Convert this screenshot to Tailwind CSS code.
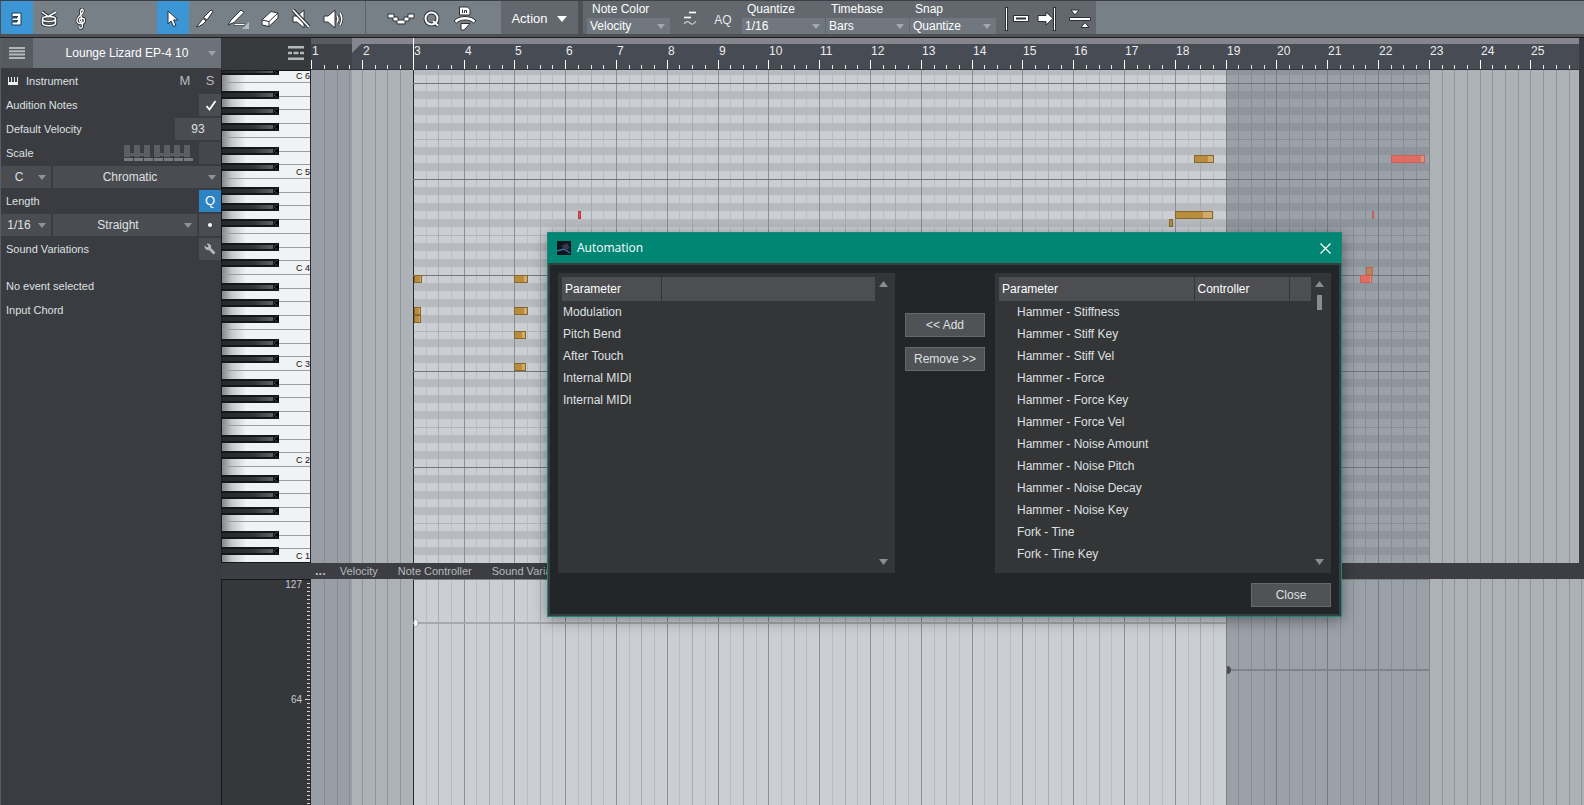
<!DOCTYPE html>
<html lang="en">

<head>
    <meta charset="UTF-8">
    <meta name="viewport" content="width=device-width, initial-scale=1.0">
    <title>Piano Roll Editor</title>
    <script src="https://cdn.jsdelivr.net/npm/@tailwindcss/browser@4"></script>
</head>

<body class="flex h-screen flex-col overflow-hidden bg-[#3a3c41] font-['Liberation_Sans',Arial,sans-serif] text-[11px] text-[#dfe0e2]">

    <!-- Toolbar -->
    <header class="flex h-[38px] shrink-0 border-t border-b border-t-[#3c3f44] border-b-[#1b1c1e] bg-[#4e5257] pb-[3px] pl-px text-xs text-white">
        <div class="flex flex-1 bg-[#788087] [&_svg]:mt-[2px]">
            <button aria-label="Piano view" class="flex h-full w-8 items-center justify-center bg-[#3c96d6]">
                <svg width="12" height="14" viewBox="0 0 12 14"><path d="M1 1h9v12H1v-3h5V9H1V6h5V5H1z" fill="#fff" stroke="#1d3b55"/><path d="M2 4.500h5M2 8.500h5" stroke="#1d3b55"/></svg>
            </button>
            <button aria-label="Drum view" class="flex h-full w-8 items-center justify-center">
                <svg width="18" height="18" viewBox="0 0 18 18" fill="none"><g stroke="#2c3034" stroke-width="3.400"><path d="M2 2l7 5M16 2L9 6"/><ellipse cx="9" cy="9" rx="6.500" ry="2.500"/><path d="M2.500 9v4c0 3.500 13 3.500 13 0V9"/></g><g stroke="#fff" stroke-width="1.500"><path d="M2 2l7 5M16 2L9 6"/><ellipse cx="9" cy="9" rx="6.500" ry="2.500"/><path d="M2.500 9v4c0 3.500 13 3.500 13 0V9"/></g></svg>
            </button>
            <button aria-label="Score view" class="flex h-full w-8 items-center justify-center">
                <svg width="14" height="22" viewBox="0 0 14 22" fill="none"><path d="M5 18.500c0 2.500 3.500 2.300 3.500-.5L6.500 4.500c0-4.500 3.500-4 2.500-.5-.6 2.500-6 5-6 8.500 0 4 7.500 4 7.500 0 0-3.300-5-3-5-.3 0 1 .8 1.700 1.500 1.800" stroke="#2c3034" stroke-width="3"/><path d="M5 18.500c0 2.500 3.500 2.300 3.500-.5L6.500 4.500c0-4.500 3.500-4 2.500-.5-.6 2.500-6 5-6 8.500 0 4 7.500 4 7.500 0 0-3.300-5-3-5-.3 0 1 .8 1.700 1.500 1.800" stroke="#fff" stroke-width="1.300"/></svg>
            </button>
            <div class="ml-[60px] flex border-r border-[#5d6369] pr-[14px]">
                <button aria-label="Arrow tool" class="flex h-full w-8 items-center justify-center bg-[#3c96d6]">
                    <svg width="14" height="18" viewBox="0 0 14 18"><path d="M2 1v13l3-3 2.500 5.500 2.500-1L7.500 10H12z" fill="#fff" stroke="#23323f"/></svg>
                </button>
                <button aria-label="Split tool" class="flex h-full w-8 items-center justify-center">
                    <svg width="20" height="20" viewBox="0 0 20 20"><path d="M1.500 18L8 9.500l3 2.500c-2 3-5.500 5-9.500 6z" fill="#fff" stroke="#2c3034"/><path d="M8.500 8.500l7.500-7.500 2 1.500-6 8.500z" fill="#fff" stroke="#2c3034"/></svg>
                </button>
                <button aria-label="Paint tool" class="flex h-full w-[34px] items-center justify-center">
                    <svg width="24" height="22" viewBox="0 0 24 22"><path d="M2 17l3-5L15 2l3 2.500L8 14.500z" fill="#fff" stroke="#2c3034"/><path d="M8 16.500h11" stroke="#2c3034" stroke-width="3"/><path d="M8.500 16.500h10" stroke="#fff" stroke-width="1.500"/><path d="M23 14v7h-7z" fill="#b5babf"/></svg>
                </button>
                <button aria-label="Eraser tool" class="flex h-full w-[30px] items-center justify-center">
                    <svg width="20" height="18" viewBox="0 0 20 18" stroke="#2c3034"><path d="M2 10L11 1.500l7 1.500v5l-9 8.500-7-1.500z" fill="#fff"/><path d="M2 10l7 1.500L18 3M9 11.500v5" fill="none"/></svg>
                </button>
                <button aria-label="Mute tool" class="flex h-full w-8 items-center justify-center">
                    <svg width="20" height="20" viewBox="0 0 20 20"><path d="M2 7h4l7-6v18l-7-6H2z" fill="#fff" stroke="#2c3034"/><path d="M2 1l16 17" stroke="#2c3034" stroke-width="4"/><path d="M2 1l16 17" stroke="#fff" stroke-width="1.800"/></svg>
                </button>
                <button aria-label="Listen tool" class="flex h-full w-[34px] items-center justify-center">
                    <svg width="22" height="20" viewBox="0 0 22 20" fill="none"><path d="M1 7h4l7-6v18l-7-6H1z" fill="#fff" stroke="#2c3034"/><g stroke="#2c3034" stroke-width="3"><path d="M14 6.500q2 3.500 0 7M17 4q3.500 6 0 12"/></g><g stroke="#fff" stroke-width="1.500"><path d="M14 6.500q2 3.500 0 7M17 4q3.500 6 0 12"/></g></svg>
                </button>
            </div>
            <div class="flex flex-1 items-center pl-[21px]">
                <button aria-label="Humanize" class="flex h-full w-7 items-center">
                    <svg width="28" height="12" viewBox="0 0 28 12"><path d="M1 1h6v3h4v3h6V4h4V1h6v4h-5v3h-4v3h-8V8H6V5H1z" fill="#fff" stroke="#2c3034"/><path d="M7 4v1M11 7v1M17 7v1M21 4v1" stroke="#2c3034"/></svg>
                </button>
                <button aria-label="Quantize" class="ml-[7px] flex h-full w-5 items-center justify-center">
                    <svg width="20" height="20" viewBox="0 0 20 20" fill="none"><g stroke="#2c3034" stroke-width="4"><circle cx="9.500" cy="9.500" r="6"/><path d="M11 12l5 4.500"/></g><g stroke="#fff" stroke-width="2"><circle cx="9.500" cy="9.500" r="6"/><path d="M11 12l5 4.500"/></g></svg>
                </button>
                <button aria-label="Event transform" class="ml-[9px] flex h-full w-7 items-center justify-center">
                    <svg width="24" height="26" viewBox="0 0 24 26" stroke="#2c3034"><path d="M6.500 1h8l2.500 2.500V9H6.500z" fill="#fff"/><path d="M9.500 3.500V7M11.500 7V4.500h2V7" fill="none"/><path d="M1 15C5 9 19 9 23 15l-2.500 2C17 13 7 13 3.500 17z" fill="#fff"/><path d="M8 17.500h9l-6 6.500H8z" fill="#fff"/></svg>
                </button>
            </div>
        </div>
        <div class="flex shrink-0">
            <button class="flex w-[77px] items-center justify-center gap-2 bg-[#62686e] pt-[2px] text-[13px]">
                <span>Action</span>
                <svg width="12" height="8" viewBox="0 0 12 8"><path d="M1 1h10L6 7z" fill="#fff"/></svg>
            </button>
            <div class="ml-[5px] flex bg-[#62686e]">
                <div class="ml-1 flex w-[83px] flex-col justify-between">
                    <label for="noteColor" class="pl-[5px] leading-4">Note Color</label>
                    <div class="relative h-4 bg-[#70777e]">
                        <select id="noteColor" class="block h-4 w-full appearance-none pl-[3px] leading-4"><option>Velocity</option><option>Pitch</option></select>
                        <svg class="pointer-events-none absolute top-[6px] right-[5px]" width="8" height="5" viewBox="0 0 8 5"><path d="M0 0h8L4 5z" fill="#a3a9ae"/></svg>
                    </div>
                </div>
                <button aria-label="Ghost notes" class="ml-[13px] flex w-[14px] items-center justify-center pt-[2px]">
                    <svg width="14" height="16" viewBox="0 0 14 16" fill="none"><path d="M6 1.500h7M1 6.500h7" stroke="#2c3034" stroke-width="3"/><path d="M6 1.500h7M1 6.500h7" stroke="#fff" stroke-width="2"/><path d="M1 13q3-4 6-1t6-2" stroke="#c3c7ca" stroke-width="1.300"/></svg>
                </button>
                <button class="ml-4 w-5 pt-1 text-[#e8e9ea]">AQ</button>
                <div class="ml-[9px] flex w-[83px] flex-col justify-between">
                    <label for="quantize" class="pl-[5px] leading-4">Quantize</label>
                    <div class="relative h-4 bg-[#70777e]">
                        <select id="quantize" class="block h-4 w-full appearance-none pl-[3px] leading-4"><option>1/16</option><option>1/8</option></select>
                        <svg class="pointer-events-none absolute top-[6px] right-[5px]" width="8" height="5" viewBox="0 0 8 5"><path d="M0 0h8L4 5z" fill="#a3a9ae"/></svg>
                    </div>
                </div>
                <div class="ml-px flex w-[83px] flex-col justify-between">
                    <label for="timebase" class="pl-[5px] leading-4">Timebase</label>
                    <div class="relative h-4 bg-[#70777e]">
                        <select id="timebase" class="block h-4 w-full appearance-none pl-[3px] leading-4"><option>Bars</option><option>Seconds</option></select>
                        <svg class="pointer-events-none absolute top-[6px] right-[5px]" width="8" height="5" viewBox="0 0 8 5"><path d="M0 0h8L4 5z" fill="#a3a9ae"/></svg>
                    </div>
                </div>
                <div class="ml-px flex w-[86px] flex-col justify-between">
                    <label for="snap" class="pl-[5px] leading-4">Snap</label>
                    <div class="relative h-4 bg-[#70777e]">
                        <select id="snap" class="block h-4 w-full appearance-none pl-[3px] leading-4"><option>Quantize</option><option>Adaptive</option></select>
                        <svg class="pointer-events-none absolute top-[6px] right-[5px]" width="8" height="5" viewBox="0 0 8 5"><path d="M0 0h8L4 5z" fill="#a3a9ae"/></svg>
                    </div>
                </div>
                <div class="flex items-center gap-2 pt-[2px] pr-[5px] pl-[9px]">
                    <button aria-label="Snap to start">
                        <svg width="24" height="24" viewBox="0 0 24 24"><path d="M1.500 0v24" stroke="#2c3034" stroke-width="3"/><path d="M1.500 1v22" stroke="#fff"/><rect x="8.500" y="8.500" width="15" height="6" fill="#fff" stroke="#2c3034"/><path d="M11 11.500h10" stroke="#2c3034" stroke-width="2"/></svg>
                    </button>
                    <button aria-label="Snap to end">
                        <svg width="19" height="24" viewBox="0 0 19 24"><path d="M17.500 0v24" stroke="#2c3034" stroke-width="3"/><path d="M17.500 1v22" stroke="#fff"/><path d="M1 8.500h8V5l7 6.500L9 18v-3.500H1z" fill="#fff" stroke="#2c3034"/></svg>
                    </button>
                    <button aria-label="Snap to zero crossing" class="ml-[5px]">
                        <svg width="22" height="24" viewBox="0 0 22 24" stroke="#2c3034"><path d="M2 3h8L6 8zM12 20.500h8l-4-5z" fill="#fff"/><path d="M.5 10.500h21v3H.5z" fill="#fff"/></svg>
                    </button>
                </div>
            </div>
        </div>
        <div class="w-[488px] shrink-0 bg-[#788087]"></div>
    </header>

    <main class="flex min-h-0 flex-1">

        <!-- Inspector -->
        <aside class="flex w-[221px] shrink-0 flex-col border-l border-[#5a5d63]">
            <div class="mb-px flex h-[30px]">
                <button aria-label="Tracks" class="flex w-8 items-center justify-center bg-[#565b62]">
                    <svg width="16" height="12" viewBox="0 0 16 12"><path d="M0 1h16M0 4.300h16M0 7.600h16M0 11h16" stroke="#b2b6bb" stroke-width="2"/></svg>
                </button>
                <div class="relative flex-1 bg-[#6c727a]">
                    <select aria-label="Instrument track" class="h-full w-full appearance-none text-center text-xs text-white"><option>Lounge Lizard EP-4 10</option></select>
                    <svg class="pointer-events-none absolute top-[13px] right-[5px]" width="8" height="5" viewBox="0 0 8 5"><path d="M0 0h8L4 5z" fill="#9da3a9"/></svg>
                </div>
            </div>
            <div class="flex h-6 items-center pl-[7px]">
                <svg width="10" height="8" viewBox="0 0 10 8"><path d="M0 0h1v5h2V0h1v5h2V0h1v5h2V0h1v8H0z" fill="#eceded"/></svg>
                <span class="ml-2 flex-1">Instrument</span>
                <button class="w-[22px] text-[13px] text-[#b9bbbe]">M</button>
                <button class="ml-[3px] w-[22px] text-[13px] text-[#b9bbbe]">S</button>
            </div>
            <div class="flex h-6 items-center justify-between pl-[5px]">
                <label for="audition">Audition Notes</label>
                <div class="relative h-[22px] w-[22px]">
                    <input id="audition" type="checkbox" checked class="peer block h-[22px] w-[22px] appearance-none bg-[#4a4c51]">
                    <svg class="pointer-events-none absolute top-[6px] left-[6px] hidden peer-checked:block" width="12" height="11" viewBox="0 0 12 11"><path d="M1.500 6l3 3.500L10.500 1" fill="none" stroke="#fff" stroke-width="1.800"/></svg>
                </div>
            </div>
            <div class="flex h-6 items-center justify-between pl-[5px]">
                <label for="velocity">Default Velocity</label>
                <input id="velocity" type="text" value="93" class="h-[22px] w-[46px] bg-[#4a4c51] text-center text-xs">
            </div>
            <div class="flex h-6 items-center pl-[5px]">
                <label for="scaleOn" class="flex-1">Scale</label>
                <svg id="scaleKeys" width="72" height="16"></svg>
                <input id="scaleOn" type="checkbox" class="ml-[3px] block h-[22px] w-[22px] appearance-none bg-[#45474c]">
            </div>
            <div class="flex h-6 items-center gap-[2px] text-xs">
                <div class="relative h-[22px] w-[50px] bg-[#4a4c51]">
                    <select aria-label="Scale root" class="h-full w-full appearance-none pr-[14px] text-center"><option>C</option><option>D</option></select>
                    <svg class="pointer-events-none absolute top-[9px] right-[5px]" width="8" height="5" viewBox="0 0 8 5"><path d="M0 0h8L4 5z" fill="#8f9296"/></svg>
                </div>
                <div class="relative h-[22px] flex-1 bg-[#4a4c51]">
                    <select aria-label="Scale type" class="h-full w-full appearance-none pr-[14px] text-center"><option>Chromatic</option><option>Major</option></select>
                    <svg class="pointer-events-none absolute top-[9px] right-[5px]" width="8" height="5" viewBox="0 0 8 5"><path d="M0 0h8L4 5z" fill="#8f9296"/></svg>
                </div>
            </div>
            <div class="flex h-6 items-center justify-between pl-[5px]">
                <span>Length</span>
                <button class="h-[22px] w-[22px] bg-[#2d84c4] text-[13px] text-white">Q</button>
            </div>
            <div class="flex h-6 items-center gap-[2px] text-xs">
                <div class="relative h-[22px] w-[50px] bg-[#4a4c51]">
                    <select aria-label="Note length" class="h-full w-full appearance-none pr-[14px] text-center"><option>1/16</option><option>1/8</option></select>
                    <svg class="pointer-events-none absolute top-[9px] right-[5px]" width="8" height="5" viewBox="0 0 8 5"><path d="M0 0h8L4 5z" fill="#8f9296"/></svg>
                </div>
                <div class="relative h-[22px] flex-1 bg-[#4a4c51]">
                    <select aria-label="Note feel" class="h-full w-full appearance-none pr-[14px] text-center"><option>Straight</option><option>Triplet</option></select>
                    <svg class="pointer-events-none absolute top-[9px] right-[5px]" width="8" height="5" viewBox="0 0 8 5"><path d="M0 0h8L4 5z" fill="#8f9296"/></svg>
                </div>
                <button aria-label="Dotted" class="flex h-[22px] w-[22px] items-center justify-center bg-[#4a4c51]"><span class="size-1 rounded-full bg-white"></span></button>
            </div>
            <div class="flex h-6 items-center justify-between pl-[5px]">
                <span>Sound Variations</span>
                <button aria-label="Edit sound variations" class="flex h-[22px] w-[22px] items-center justify-center bg-[#4a4c51]">
                    <svg width="12" height="12" viewBox="0 0 12 12"><path d="M2.500.8A3.400 3.400 0 0 1 7 5l4.500 4.500-2 2L5 7A3.400 3.400 0 0 1 .8 2.500L3 4.500 4.500 3z" fill="#b4b6b9"/></svg>
                </button>
            </div>
            <p class="mt-[13px] flex h-6 items-center pl-[5px]">No event selected</p>
            <p class="flex h-6 items-center pl-[5px]">Input Chord</p>
        </aside>

        <section class="flex min-w-0 flex-1 flex-col">
            <!-- Ruler -->
            <div class="flex h-8 shrink-0 pr-[5px]">
                <div class="flex w-[90px] shrink-0 items-start justify-end bg-[#38393d] pt-2 pr-[7px]">
                    <button aria-label="View options">
                        <svg width="16" height="14" viewBox="0 0 16 14"><path d="M0 1.200h16M0 12.800h16" stroke="#b4b7bb" stroke-width="2.400"/><path d="M0 7h4M5.500 7h5M12 7h4" stroke="#b4b7bb" stroke-width="2.400"/></svg>
                    </button>
                </div>
                <svg id="ruler" class="block h-full w-0 min-w-0 flex-1"></svg>
            </div>

            <!-- Keyboard and note grid -->
            <div class="flex h-[493px] shrink-0 pr-[5px]">
                <svg id="keyboard" class="block h-full w-[90px] shrink-0"></svg>
                <svg id="roll" class="block h-full w-0 min-w-0 flex-1"></svg>
            </div>

            <!-- Controller lane -->
            <nav class="flex h-4 shrink-0 items-center bg-[#3c3e43] pl-[94px] text-[#b9bbbf]">
                <button class="text-[13px] leading-3 font-bold">...</button>
                <button class="ml-[14px]">Velocity</button>
                <button class="ml-5">Note Controller</button>
                <button class="ml-5">Sound Variations</button>
            </nav>
            <div class="flex min-h-0 flex-1">
                <svg id="laneScale" class="block h-full w-[90px] shrink-0"></svg>
                <svg id="lane" class="block h-full w-0 min-w-0 flex-1"></svg>
            </div>
        </section>
    </main>

    <!-- Automation dialog -->
    <div role="dialog" aria-labelledby="dialogTitle" class="absolute top-[232px] left-[547px] flex w-[795px] flex-col border border-[#1f8577] bg-[#222629] text-xs shadow-[0_3px_14px_rgba(0,0,0,0.4)]">
        <div class="flex h-[30px] shrink-0 items-center bg-[#028674] pr-[10px] pl-[9px] text-white">
            <svg width="14" height="14" viewBox="0 0 14 14"><rect width="14" height="14" fill="#10141d"/><path d="M0 10l7-2 6 4" fill="none" stroke="#3f6fae" stroke-width="1.500"/><path d="M4 5l6-3 3 5-4 2z" fill="#343a4a"/></svg>
            <h2 id="dialogTitle" class="ml-[6px] flex-1 font-['Open_Sans',sans-serif] text-xs">Automation</h2>
            <button aria-label="Close dialog">
                <svg width="11" height="11" viewBox="0 0 11 11"><path d="M.5.5l10 10M10.500.5l-10 10" stroke="#fff" stroke-width="1.200"/></svg>
            </button>
        </div>
        <div class="flex flex-col border-2 border-[#33403f] px-2 pb-[7px]">
            <div class="mt-2 flex h-[300px]">
                <div class="flex flex-1 justify-between bg-[#343537] p-1">
                    <table class="h-fit w-[313px] table-fixed text-left">
                        <thead class="h-6 bg-[#4d4e51] text-white">
                            <tr>
                                <th class="w-[99px] border-r border-[#343537] pl-[3px] font-normal">Parameter</th>
                                <th></th>
                            </tr>
                        </thead>
                        <tbody>
                            <tr class="h-[22px]"><td class="pl-px whitespace-nowrap">Modulation</td><td></td></tr>
                            <tr class="h-[22px]"><td class="pl-px whitespace-nowrap">Pitch Bend</td><td></td></tr>
                            <tr class="h-[22px]"><td class="pl-px whitespace-nowrap">After Touch</td><td></td></tr>
                            <tr class="h-[22px]"><td class="pl-px whitespace-nowrap">Internal MIDI</td><td></td></tr>
                            <tr class="h-[22px]"><td class="pl-px whitespace-nowrap">Internal MIDI</td><td></td></tr>
                        </tbody>
                    </table>
                    <div class="flex w-4 flex-col items-center justify-between py-1">
                        <svg width="9" height="6" viewBox="0 0 9 6"><path d="M4.500 0L9 6H0z" fill="#8b8c8e"/></svg>
                        <svg width="9" height="6" viewBox="0 0 9 6"><path d="M0 0h9L4.500 6z" fill="#8b8c8e"/></svg>
                    </div>
                </div>
                <div class="flex w-[100px] flex-col gap-[10px] px-[10px] pt-10">
                    <button class="h-6 border border-[#66686c] bg-[#505256]">&lt;&lt; Add</button>
                    <button class="h-6 border border-[#66686c] bg-[#505256]">Remove &gt;&gt;</button>
                </div>
                <div class="flex flex-1 justify-between bg-[#343537] p-1">
                    <table class="h-fit w-[312px] table-fixed text-left">
                        <thead class="h-6 bg-[#4d4e51] text-white">
                            <tr>
                                <th class="w-[195px] border-r border-[#343537] pl-[3px] font-normal">Parameter</th>
                                <th class="w-[95px] border-r border-[#343537] pl-[3px] font-normal">Controller</th>
                                <th></th>
                            </tr>
                        </thead>
                        <tbody>
                            <tr class="h-[22px]"><td class="pl-[18px]">Hammer - Stiffness</td><td></td><td></td></tr>
                            <tr class="h-[22px]"><td class="pl-[18px]">Hammer - Stiff Key</td><td></td><td></td></tr>
                            <tr class="h-[22px]"><td class="pl-[18px]">Hammer - Stiff Vel</td><td></td><td></td></tr>
                            <tr class="h-[22px]"><td class="pl-[18px]">Hammer - Force</td><td></td><td></td></tr>
                            <tr class="h-[22px]"><td class="pl-[18px]">Hammer - Force Key</td><td></td><td></td></tr>
                            <tr class="h-[22px]"><td class="pl-[18px]">Hammer - Force Vel</td><td></td><td></td></tr>
                            <tr class="h-[22px]"><td class="pl-[18px]">Hammer - Noise Amount</td><td></td><td></td></tr>
                            <tr class="h-[22px]"><td class="pl-[18px]">Hammer - Noise Pitch</td><td></td><td></td></tr>
                            <tr class="h-[22px]"><td class="pl-[18px]">Hammer - Noise Decay</td><td></td><td></td></tr>
                            <tr class="h-[22px]"><td class="pl-[18px]">Hammer - Noise Key</td><td></td><td></td></tr>
                            <tr class="h-[22px]"><td class="pl-[18px]">Fork - Tine</td><td></td><td></td></tr>
                            <tr class="h-[22px]"><td class="pl-[18px]">Fork - Tine Key</td><td></td><td></td></tr>
                        </tbody>
                    </table>
                    <div class="flex w-4 flex-col items-center justify-between py-1">
                        <div class="flex flex-col items-center gap-2">
                            <svg width="9" height="6" viewBox="0 0 9 6"><path d="M4.500 0L9 6H0z" fill="#8b8c8e"/></svg>
                            <div class="h-[15px] w-[5px] bg-[#8b8c8e]"></div>
                        </div>
                        <svg width="9" height="6" viewBox="0 0 9 6"><path d="M0 0h9L4.500 6z" fill="#8b8c8e"/></svg>
                    </div>
                </div>
            </div>
            <div class="mt-[10px] flex justify-end">
                <button class="h-6 w-20 border border-[#66686c] bg-[#505256]">Close</button>
            </div>
        </div>
    </div>

    <script>
        const BAR = 50.8;
        const ORIGIN = 0.7;
        const ROW = 8;
        const OCTAVE = ROW * 12;
        const FIRST_C = 13;
        const beatX = (i) => Math.floor(ORIGIN + i * BAR / 4);
        const barX = (n) => beatX((n - 1) * 4);
        const rect = (x, y, w, h, fill, extra = '') =>
            `<rect x="${x}" y="${y}" width="${w}" height="${h}" fill="${fill}" ${extra}/>`;

        // part runs from bar 3 to 19, its tail to bar 23
        const partStart = barX(3);
        const partEnd = barX(19);
        const tailEnd = barX(23);

        function drawBackground(w, h) {
            let s = rect(0, 0, w, h, '#adb2b6');
            s += rect(0, 0, 41, h, '#999da5');
            s += rect(partStart, 0, partEnd - partStart, h, '#cbced3');
            s += rect(partEnd, 0, tailEnd - partEnd, h, '#9aa1a8');
            return s;
        }

        function drawBeats(w, h) {
            let s = '';
            for (let i = 1; beatX(i) < w; i++) {
                const x = beatX(i);
                const beat = i % 4;
                let color = '#90959a';
                if (x < 41) color = '#868a91';
                else if (x >= partStart && x < partEnd) color = beat === 0 ? '#8a8e96' : beat === 2 ? '#a9acb2' : '#b9bcc1';
                else if (x >= partEnd && x < tailEnd) color = beat === 0 ? '#757b82' : '#878d94';
                s += rect(x, 0, 1, h, color);
            }
            s += rect(partStart, 0, 1, h, '#26282b');
            s += rect(partEnd, 0, 1, h, '#7c8084') + rect(tailEnd, 0, 1, h, '#808487');
            return s;
        }

        function drawRuler() {
            const el = document.getElementById('ruler');
            const w = el.clientWidth;
            let s = rect(0, 0, w, 32, '#474b54') + rect(0, 0, w, 6, '#84858d');
            s += rect(0, 0, 41, 32, '#3f4249') + rect(0, 0, 41, 6, '#585b62');
            s += '<path d="M41 6h9l-9 9z" fill="#84858d"/>';
            s += rect(0, 31, w, 1, '#33363b');
            for (let i = 0; beatX(i) < w; i++) {
                const x = beatX(i);
                s += i % 4 ? rect(x, 27, 1, 4, '#e6e7e9') : rect(x, 22, 1, 9, '#fff');
                if (i % 4 === 0) s += `<text x="${x + 1}" y="17" font-size="12" fill="#eceded">${i / 4 + 1}</text>`;
            }
            s += rect(partStart, 0, 1, 32, '#fff');
            el.innerHTML = s;
        }

        function drawKeyboard() {
            let s = `<defs>
                <linearGradient id="ivory"><stop offset="0" stop-color="#7d7f82"/><stop offset=".12" stop-color="#c5c7c9"/><stop offset=".28" stop-color="#f1f2f3"/></linearGradient>
                <linearGradient id="ebony"><stop offset="0" stop-color="#24282a"/><stop offset=".6" stop-color="#303436"/><stop offset="1" stop-color="#5c6062"/></linearGradient>
            </defs>`;
            s += rect(0, 0, 90, 493, 'url(#ivory)');
            for (let o = -1; o < 6; o++) {
                const top = FIRST_C + o * OCTAVE;
                for (let k = 0; k < 7; k++) s += rect(0, Math.round(top + k * OCTAVE / 7) - 1, 90, 1, '#9a9c9f');
                for (const k of [1, 3, 5, 8, 10]) {
                    const y = top + k * ROW;
                    s += rect(0, y, 58, 8, '#14171a') + rect(1, y + 2, 51, 4, 'url(#ebony)');
                    s += `<path d="M58 ${y + 1}l-5 3 5 3z" fill="#000"/><path d="M57 ${y + 1}l-4 3 4 3" fill="none" stroke="#4a4d4f" stroke-width=".7"/>`;
                }
                if (o >= 0) s += `<text x="75" y="${top - 4}" font-size="9" fill="#111">C ${6 - o}</text>`;
            }
            s += rect(0, 0, 1, 493, '#17181a') + rect(89, 0, 1, 493, '#26282b') + rect(0, 492, 90, 1, '#17181a');
            s += rect(0, 0, 90, 1, '#17181a');
            document.getElementById('keyboard').innerHTML = s;
        }

        // x, y, width, velocity part width, kind
        const notes = [
            [103, 205, 8, 5, 'gold'], [103, 237, 7, 4, 'gold'], [103, 245, 7, 4, 'gold'],
            [203, 205, 14, 9, 'gold'], [203, 237, 14, 9, 'gold'], [203, 261, 12, 7, 'gold'], [203, 293, 12, 7, 'gold'],
            [267, 141, 3, 3, 'red'],
            [883, 85, 20, 13, 'gold'], [864, 141, 38, 27, 'gold'], [858, 149, 4, 2, 'gold'],
            [1080, 85, 34, 29, 'coral'], [1061, 141, 2, 2, 'coral'], [1055, 197, 7, 5, 'rust'], [1049, 205, 12, 9, 'coral'],
        ];
        const noteColors = {
            gold: ['#b98d3e', '#cfab6c', '#86682a'],
            red: ['#dc5a55', '#dc5a55', '#b73c3a'],
            coral: ['#e06c62', '#dd9086', '#cb6058'],
            rust: ['#b98463', '#c1957b', '#c1683f'],
        };

        function drawRoll() {
            const el = document.getElementById('roll');
            const w = el.clientWidth;
            const h = 493;
            let s = drawBackground(w, h);
            for (let o = -1; o < 5; o++) {
                const top = FIRST_C + o * OCTAVE;
                for (const k of [1, 3, 5, 8, 10]) {
                    s += rect(partStart, top + k * ROW, partEnd - partStart, ROW, '#b7babf');
                    s += rect(partEnd, top + k * ROW, tailEnd - partEnd, ROW, '#8f959d');
                }
                s += rect(partStart, top + 7 * ROW, tailEnd - partStart, 1, '#000', 'fill-opacity=".12"');
            }
            s += drawBeats(w, h);
            for (let y = FIRST_C; y < h; y += OCTAVE) s += rect(partStart, y, tailEnd - partStart, 1, '#72767c');
            for (const [x, y, nw, vw, kind] of notes) {
                const [fill, light, edge] = noteColors[kind];
                s += rect(x, y, nw, 8, edge);
                if (nw > 2) s += rect(x + 1, y + 1, nw - 2, 6, light) + rect(x + 1, y + 1, Math.min(vw, nw - 2), 6, fill);
            }
            el.innerHTML = s;
        }

        function drawLane() {
            const el = document.getElementById('lane');
            const w = el.clientWidth;
            const h = el.clientHeight;
            let s = drawBackground(w, h) + drawBeats(w, h);
            s += rect(partStart, 0, tailEnd - partStart, 1, '#7c8085');
            s += rect(partStart, 43, partEnd - partStart, 2, '#a5a8ac') + rect(partEnd, 90, tailEnd - partEnd, 2, '#7f858b');
            s += `<path d="M${partStart + 1} 40a4 4 0 0 1 0 8z" fill="#fff" stroke="#85888c" stroke-width=".6"/>`;
            s += `<path d="M${partEnd + 1} 87a4 4 0 0 1 0 8z" fill="#4a4e53"/>`;
            el.innerHTML = s;

            let t = rect(0, 0, 90, h, '#36373b') + rect(0, 0, 90, 1, '#17181a') + rect(0, 0, 1, h, '#17181a') + rect(89, 0, 1, h, '#222427');
            for (let y = 4; y < h; y += 4) t += y === 120 ? rect(84, y, 5, 1, '#d6d7d9') : rect(86, y, 3, 1, '#d6d7d9');
            t += '<text x="81" y="9" font-size="10" text-anchor="end" fill="#c9cacd">127</text>';
            t += '<text x="81" y="124" font-size="10" text-anchor="end" fill="#c9cacd">64</text>';
            document.getElementById('laneScale').innerHTML = t;
        }

        function drawScaleKeys() {
            let s = '';
            for (let i = 0; i < 7; i++) {
                const left = i * 10;
                s += rect(left, 0, 6, 12, '#5b5e63') + rect(left, 13, 9, 3, '#777a7f');
                if (i !== 2 && i !== 6) s += rect(left + 6, 8, 4, 3, '#5b5e63');
            }
            document.getElementById('scaleKeys').innerHTML = s;
        }

        function draw() {
            drawRuler();
            drawRoll();
            drawLane();
        }

        drawScaleKeys();
        drawKeyboard();
        draw();
        const observer = new ResizeObserver(draw);
        observer.observe(document.querySelector('main'));
        window.addEventListener('load', draw);
    </script>
</body>

</html>
